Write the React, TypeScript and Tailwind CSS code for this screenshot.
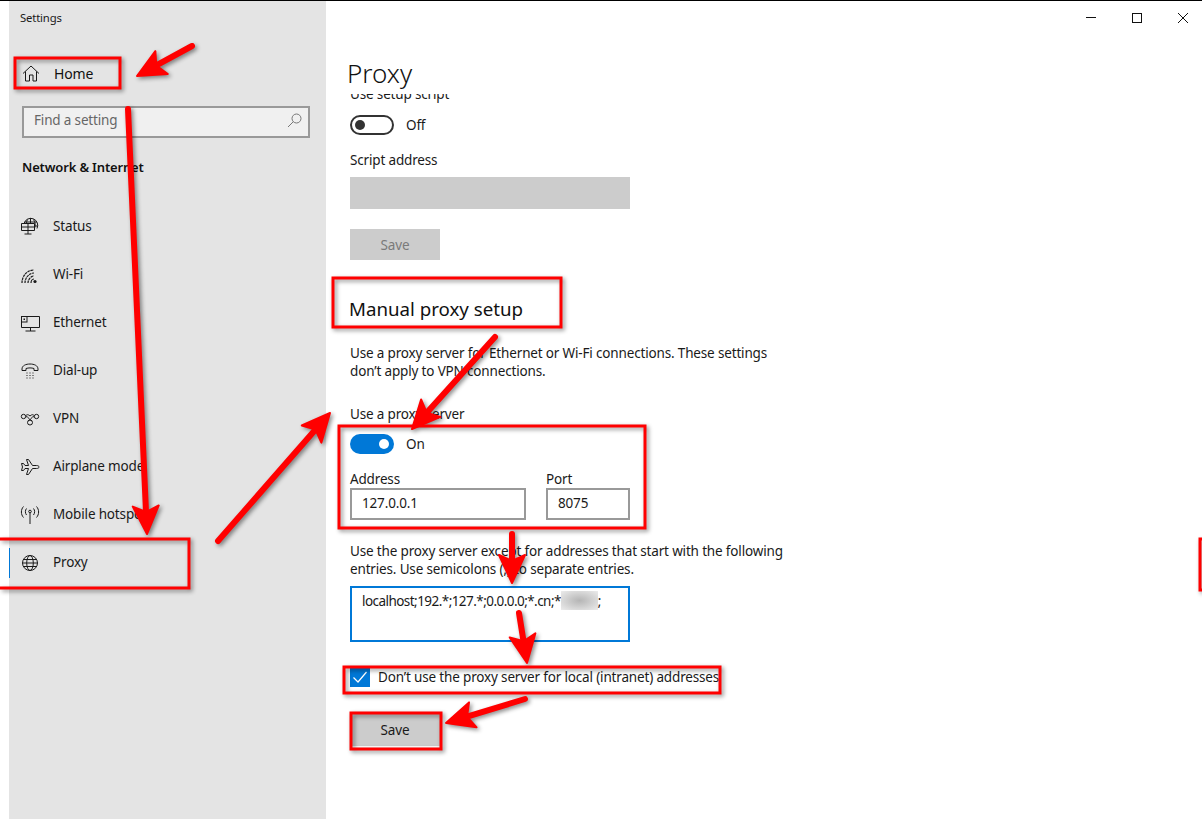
import type { ReactNode } from "react";

const font = "font-['Noto_Sans','Liberation_Sans',sans-serif]";

// small outline icons, all on a 20 grid like the Settings nav glyphs
function Glyph({ children, size = 20 }: { children: ReactNode; size?: number }) {
  return (
    <svg width={size} height={size} viewBox="0 0 20 20" fill="none" stroke="#1a1a1a" strokeWidth="1" className="shrink-0">
      {children}
    </svg>
  );
}

const HomeIcon = () => (
  <Glyph>
    <path d="M2 10.500 10 3l8 7.500M4.500 8.500V18h4v-6h3.500v6h3.500V8.500" />
  </Glyph>
);

const StatusIcon = () => (
  <Glyph>
    <path d="M4 6.500a7 7 0 1 1 13 5" />
    <path d="M7.500 2.500C6.800 3.700 6.500 5 6.500 6.500M13.500 2.500c2 2.700 2 6 1 9M5 5h12M10.500 1v5.500M15 9h3" />
    <path d="M1.500 6.500h13v7h-13zM1.500 10h13M8 6.500v7M8 13.500v3.500M4.500 17h7" />
  </Glyph>
);

const WifiIcon = () => (
  <Glyph>
    <path d="M2 18c0-7 5-13 12-13M5 18c0-5 4-10 9-10M8 18c0-3 2.500-7 6-7" strokeDasharray="2.500 0.700" strokeWidth="1.200" />
    <path d="M11 18c0-1.500 1-4 3-4" strokeWidth="1.200" />
    <circle cx="15" cy="16.500" r="1.600" fill="#1a1a1a" stroke="none" />
  </Glyph>
);

const EthernetIcon = () => (
  <Glyph>
    <path d="M7 3.500h12.500v11H1.500V9M10.500 14.500v3.500M5.500 18h10" />
    <rect x="1.500" y="3.500" width="5.500" height="5.500" />
    <path d="M3.500 5.500h1.500v1.500H3.500z" fill="#1a1a1a" stroke="none" />
  </Glyph>
);

const DialupIcon = () => (
  <Glyph>
    <path d="M2 8C2 4.500 6 3 10 3s8 1.500 8 5v1.500h-4V7.500c-2.500-.8-5.500-.8-8 0v2H2z" />
    <path d="M6.500 12h1M9.500 12h1M12.500 12h1M6.500 14.500h1M9.500 14.500h1M12.500 14.500h1M6.500 17h1M9.500 17h1M12.500 17h1" />
  </Glyph>
);

const VpnIcon = () => (
  <Glyph>
    <circle cx="3.500" cy="7.500" r="2.200" />
    <circle cx="16.500" cy="7.500" r="2.200" />
    <circle cx="10" cy="13.500" r="2.500" />
    <path d="M5.700 7.500c3 0 3.500 3.500 6.300 4.500M14.300 7.500c-3 0-3.500 3.500-6.300 4.500M6 6.500c1-1 2-1.300 4 .5 2-1.800 3-1.500 4-.5" />
  </Glyph>
);

const PlaneIcon = () => (
  <Glyph>
    <path d="M19 10c0-1-1-1.500-2.500-1.500h-4L8.500 2.500H6.500L8.500 8.500H5L3.500 6.500H1.500L2.500 10l-1 3.500h2L5 11.500h3.500L6.500 17.500h2l4-6h4c1.500 0 2.500-.5 2.500-1.500z" />
  </Glyph>
);

const HotspotIcon = () => (
  <Glyph>
    <path d="M10 8v11" />
    <circle cx="10" cy="6.500" r="1.300" />
    <path d="M6.500 3.500c-1.500 1.800-1.500 4.500 0 6.500M13.500 3.500c1.500 1.800 1.500 4.500 0 6.500M3.500 1.500c-2.800 3-2.800 8 0 11M16.500 1.500c2.800 3 2.800 8 0 11" />
  </Glyph>
);

const GlobeIcon = () => (
  <Glyph>
    <circle cx="10" cy="10" r="7.500" />
    <ellipse cx="10" cy="10" rx="3.300" ry="7.500" />
    <path d="M2.500 10h15M3.500 6.500h13M3.500 13.500h13" />
  </Glyph>
);

const navItems = [
  { label: "Status", icon: <StatusIcon /> },
  { label: "Wi-Fi", icon: <WifiIcon /> },
  { label: "Ethernet", icon: <EthernetIcon /> },
  { label: "Dial-up", icon: <DialupIcon /> },
  { label: "VPN", icon: <VpnIcon /> },
  { label: "Airplane mode", icon: <PlaneIcon /> },
  { label: "Mobile hotspot", icon: <HotspotIcon /> },
  { label: "Proxy", icon: <GlobeIcon />, active: true },
];

function Sidebar() {
  return (
    <aside className="ml-[9px] w-[317px] shrink-0 bg-[#e4e4e4] text-[13.5px] tracking-[-0.16px]">
      <div className="flex h-[34px] items-center pl-[11px] text-[11.3px] text-[#1a1a1a]">Settings</div>
      <div className="mt-[14px] flex h-[48px] items-center gap-[13px] pl-[12px] text-[#111]">
        <HomeIcon />
        <span className="text-[14px]">Home</span>
      </div>
      <div className="ml-[13px] mr-[16px] mt-[9px] flex h-[32px] items-center justify-between border-2 border-[#999] bg-[#f0f0f0] pb-[3px] pl-[10px] pr-[6px] text-[#666]">
        <span>Find a setting</span>
        <svg width="15" height="15" viewBox="0 0 15 15" fill="none" stroke="#777" strokeWidth="1">
          <circle cx="9.500" cy="5.500" r="4.500" />
          <path d="M6.300 8.700 1 14" />
        </svg>
      </div>
      <div className="mt-[20px] pl-[13px] text-[13px] font-semibold text-[#111]">Network &amp; Internet</div>
      <nav className="mt-[25px]">
        {navItems.map((item) => (
          <div key={item.label} className="relative flex h-[48px] items-center gap-[13px] pl-[11px] text-[#1a1a1a]">
            {item.active && <div className="absolute left-0 top-[9px] h-[30px] w-px bg-[#0078d7]" />}
            {item.icon}
            <span>{item.label}</span>
          </div>
        ))}
      </nav>
    </aside>
  );
}

function Toggle({ on }: { on: boolean }) {
  return (
    <div className="flex items-center gap-3 text-[#1a1a1a]">
      {on ? (
        <div className="flex h-[20px] w-[44px] items-center justify-end rounded-full bg-[#0078d7] pr-[5px]">
          <div className="h-[10px] w-[10px] rounded-full bg-white" />
        </div>
      ) : (
        <div className="flex h-[20px] w-[44px] items-center rounded-full border-2 border-[#333] pl-[3px]">
          <div className="h-[10px] w-[10px] rounded-full bg-[#333]" />
        </div>
      )}
      <span>{on ? "On" : "Off"}</span>
    </div>
  );
}

function Content() {
  return (
    <main className="flex-1 pl-[22px]">
      <div className="flex h-[33px] items-center justify-end gap-[36px] pr-[14px]">
        <div className="h-px w-[10px] bg-[#111]" />
        <div className="h-[10px] w-[10px] border border-[#111]" />
        <svg width="10" height="10" viewBox="0 0 10 10" stroke="#111" strokeWidth="1">
          <path d="M0 0l10 10M10 0 0 10" />
        </svg>
      </div>
      <h1 className="-ml-[1px] h-[60px] pt-[19px] text-[26px] leading-[40px] font-light text-[#111]">Proxy</h1>
      <div className="h-[724px] overflow-hidden pl-[2px] text-[13.5px] tracking-[-0.16px] text-[#1a1a1a]">
        <p className="-mt-[10px] h-[19px]">Use setup script</p>
        <div className="mt-[12px]">
          <Toggle on={false} />
        </div>
        <p className="mt-[15px] h-[19px]">Script address</p>
        <div className="mt-[8px] h-[32px] w-[280px] bg-[#ccc]" />
        <div className="mt-[20px] flex h-[31px] w-[90px] items-center justify-center bg-[#ccc] text-[#7a7a7a]">Save</div>
        <h2 className="-ml-[1px] mt-[35px] text-[18.7px] leading-[28px] tracking-normal text-[#111]">Manual proxy setup</h2>
        <p className="mt-[21px] w-[440px] leading-[18px]">
          Use a proxy server for Ethernet or Wi-Fi connections. These settings don’t apply to VPN connections.
        </p>
        <p className="mt-[24px] h-[19px]">Use a proxy server</p>
        <div className="mt-[11px]">
          <Toggle on />
        </div>
        <div className="mt-[14px] flex gap-[20px]">
          <label className="block">
            <span className="block h-[19px]">Address</span>
            <div className="flex h-[32px] w-[176px] items-center border-2 border-[#999] pl-[10px]">127.0.0.1</div>
          </label>
          <label className="block">
            <span className="block h-[19px]">Port</span>
            <div className="flex h-[32px] w-[84px] items-center border-2 border-[#999] pl-[10px]">8075</div>
          </label>
        </div>
        <p className="mt-[22px] w-[440px] leading-[18px]">
          Use the proxy server except for addresses that start with the following entries. Use semicolons (;) to separate entries.
        </p>
        <div className="mt-[8px] flex h-[56px] w-[280px] items-start border-2 border-[#0078d7] pl-[10px] pt-[3px] tracking-[-0.55px]">
          <span>localhost;192.*;127.*;0.0.0.0;*.cn;*</span>
          <span className="h-[19px] w-[37px] bg-[radial-gradient(ellipse,#b5b5b5,#ececec)]" />
          <span>;</span>
        </div>
        <div className="mt-[25px] flex items-center gap-2">
          <div className="flex h-[20px] w-[20px] items-center justify-center bg-[#0078d7]">
            <svg width="16" height="16" viewBox="0 0 16 16" fill="none" stroke="#fff" strokeWidth="1.200">
              <path d="M1.500 8.500 6 13l8.500-10" />
            </svg>
          </div>
          <span>Don’t use the proxy server for local (intranet) addresses</span>
        </div>
        <div className="mt-[27px] flex h-[32px] w-[90px] items-center justify-center bg-[#ccc]">Save</div>
      </div>
    </main>
  );
}

// markup arrow, tail to tip
function Arrow({ x1, y1, x2, y2 }: { x1: number; y1: number; x2: number; y2: number }) {
  const len = Math.hypot(x2 - x1, y2 - y1);
  const ux = (x2 - x1) / len;
  const uy = (y2 - y1) / len;
  const head = 28;
  const half = 13;
  const bx = x2 - ux * head;
  const by = y2 - uy * head;
  const nx = bx + ux * 6;
  const ny = by + uy * 6;
  return (
    <g>
      <line x1={x1} y1={y1} x2={nx} y2={ny} stroke="#ff0000" strokeWidth="6" strokeLinecap="round" />
      <polygon
        points={`${x2},${y2} ${bx - uy * half},${by + ux * half} ${nx},${ny} ${bx + uy * half},${by - ux * half}`}
        fill="#ff0000"
        stroke="#ff0000"
        strokeWidth="2"
        strokeLinejoin="round"
      />
    </g>
  );
}

const boxes = [
  [15, 57, 105, 30],
  [-5, 538, 194, 49],
  [333, 277, 228, 49],
  [339, 425, 306, 102],
  [344, 666, 376, 26],
  [351, 712, 90, 36],
  [1200, 538, 10, 51],
];

const arrows = [
  [192, 45, 137, 75],
  [128, 108, 147, 533],
  [218, 540, 330, 412],
  [495, 336, 412, 428],
  [512, 533, 512, 582],
  [519, 612, 527, 662],
  [525, 698, 446, 722],
];

function Markup() {
  return (
    <svg
      width="1202"
      height="819"
      viewBox="0 0 1202 819"
      fill="none"
      className="pointer-events-none absolute left-0 top-0 drop-shadow-[2px_2px_2px_rgba(0,0,0,0.45)]"
    >
      {boxes.map(([x, y, w, h], i) => (
        <rect key={i} x={x} y={y} width={w} height={h} stroke="#ff0000" strokeWidth="3" />
      ))}
      {arrows.map(([x1, y1, x2, y2], i) => (
        <Arrow key={i} x1={x1} y1={y1} x2={x2} y2={y2} />
      ))}
    </svg>
  );
}

export default function App() {
  return (
    <div className={`relative h-[819px] w-[1202px] overflow-hidden border-t border-black bg-white ${font}`}>
      <div className="flex h-full">
        <Sidebar />
        <Content />
      </div>
      <Markup />
    </div>
  );
}
